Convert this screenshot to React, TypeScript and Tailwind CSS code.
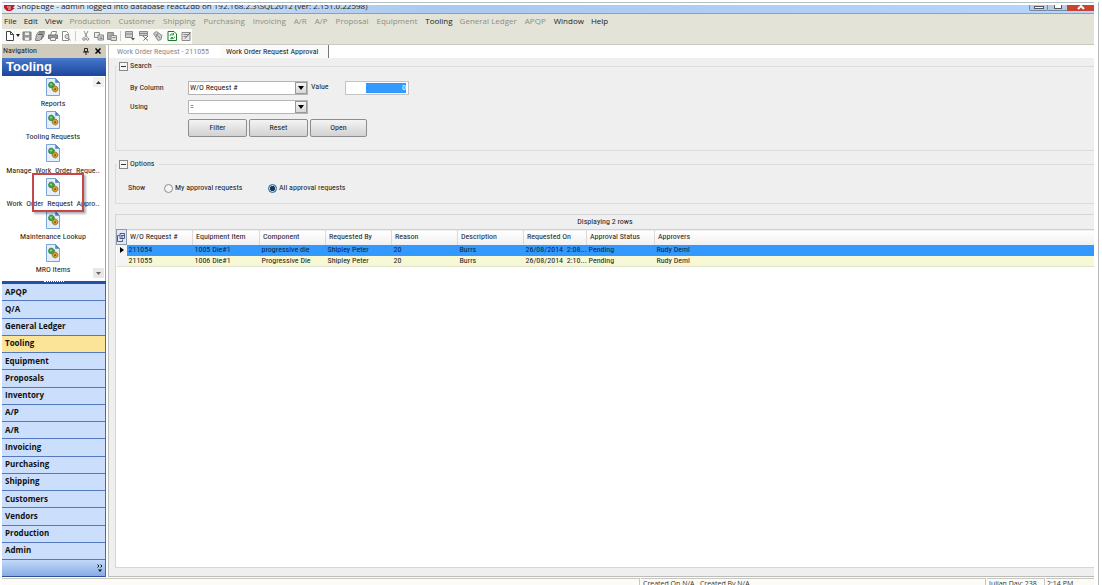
import type { ReactNode } from "react";
import clsx from "clsx";

const MENU = [
  { label: "File", on: true },
  { label: "Edit", on: true },
  { label: "View", on: true },
  { label: "Production" },
  { label: "Customer" },
  { label: "Shipping" },
  { label: "Purchasing" },
  { label: "Invoicing" },
  { label: "A/R" },
  { label: "A/P" },
  { label: "Proposal" },
  { label: "Equipment" },
  { label: "Tooling", on: true },
  { label: "General Ledger" },
  { label: "APQP" },
  { label: "Window", on: true },
  { label: "Help", on: true },
];

const SHORTCUTS = [
  "Reports",
  "Tooling Requests",
  "Manage  Work  Order  Reque..",
  "Work  Order  Request  Appro..",
  "Maintenance Lookup",
  "MRO Items",
];

const MODULES = [
  "APQP",
  "Q/A",
  "General Ledger",
  "Tooling",
  "Equipment",
  "Proposals",
  "Inventory",
  "A/P",
  "A/R",
  "Invoicing",
  "Purchasing",
  "Shipping",
  "Customers",
  "Vendors",
  "Production",
  "Admin",
];

const COLUMNS = [
  "W/O Request #",
  "Equipment Item",
  "Component",
  "Requested By",
  "Reason",
  "Description",
  "Requested On",
  "Approval Status",
  "Approvers",
];

const ROWS = [
  ["211054", "1005 Die#1", "progressive die", "Shipley Peter", "20", "Burrs", "26/08/2014  2:08...", "Pending", "Rudy Deml"],
  ["211055", "1006 Die#1", "Progressive Die", "Shipley Peter", "20", "Burrs", "26/08/2014  2:10...", "Pending", "Rudy Deml"],
];

function DocIcon() {
  return (
    <svg viewBox="0 0 14 18" className="h-[18px] w-3.5 shrink-0">
      <path d="M.5.5h9l4 4v13H.5z" fill="#e4effc" stroke="#7da3d8" />
      <path d="M9.5.5v4h4z" fill="#4f83cc" stroke="#5d8acb" strokeWidth=".6" />
      <path d="m2.500 6.500 1-2 2.500-.5 2.500 2-.5 2.500L6 10 3 9z" fill="#3fa34a" stroke="#2a7d38" strokeWidth=".7" />
      <path d="m6 11 1.500-2.500L10 8l2 2-.3 2.500-2.200 1.500L7 13z" fill="#d9a22c" stroke="#8a6212" strokeWidth=".7" />
      <circle cx="9.200" cy="11.200" r="1" fill="#7a560f" />
      <circle cx="5" cy="6.500" r=".9" fill="#a5dfa8" />
    </svg>
  );
}

function Tool({ label, children }: { label: string; children: ReactNode }) {
  return (
    <button type="button" aria-label={label} className="flex h-3 w-[13px] items-center justify-center">
      <svg viewBox="0 0 10 10" className="h-2.5 w-2.5" fill="none" stroke="#8a8a8a" strokeWidth="1">
        {children}
      </svg>
    </button>
  );
}

function Toolbar() {
  return (
    <div className="flex h-[15px] w-[190px] items-center bg-[#fafaf7] pb-0.5 pl-px">
      <Tool label="New">
        <path d="M1.500.5h4l3 3v6h-7zM5.500.5v3h3" stroke="#444" fill="#fff" />
      </Tool>
      <svg viewBox="0 0 4 3" className="h-[3px] w-1">
        <path d="M0 0h4L2 3z" fill="#222" />
      </svg>
      <Tool label="Save">
        <path d="M1 1h8v8H1z" fill="#999" stroke="#7a7a7a" />
        <path d="M3 1.500h4V4H3zM3 6.500h4V9H3z" fill="#eee" stroke="none" />
      </Tool>
      <Tool label="Save all">
        <path d="M4 .5h5.500l-1 5.500-4 3.500H.5l1-6z" fill="#bbb" stroke="#808080" />
        <path d="M3 3.500h4.500l-1 5M4 2h4.500" stroke="#666" />
      </Tool>
      <Tool label="Print">
        <path d="M2.500 4 4 .5h4.500L7.500 4" fill="#fff" />
        <path d="M.5 4h9v3.500h-9z" fill="#999" stroke="#777" />
        <path d="M2.500 6.500h5v3h-5z" fill="#eee" />
      </Tool>
      <Tool label="Print preview">
        <path d="M1.500.5h4l2 2v7h-6z" fill="#fff" />
        <circle cx="6" cy="5.500" r="2" fill="#ddd" />
        <path d="m7.500 7 2 2.500" />
      </Tool>
      <span className="mx-[3px] h-2.5 w-px bg-[#ccc]" />
      <Tool label="Cut">
        <path d="m3 0 3 6M7 0 4 6" />
        <circle cx="3" cy="8" r="1.300" />
        <circle cx="6.500" cy="8" r="1.300" />
      </Tool>
      <Tool label="Copy">
        <path d="M.5 1.500h5v5h-5z" fill="#eee" />
        <path d="M4 4h5.500v5H4zM5.500 6h3M5.500 7.500h3" fill="#ddd" />
      </Tool>
      <Tool label="Paste">
        <path d="M.5 1.500h6v7h-6z" fill="#aaa" />
        <path d="M4 4.500h5.500v5H4zM5.500 6.500h3" fill="#ddd" />
      </Tool>
      <span className="mx-0.5 h-2.5 w-px bg-[#ccc]" />
      <div className="flex gap-px">
        <Tool label="Grid view">
          <path d="M.5.5h7v6h-7zM.5 3h7" fill="#ccc" />
          <path d="M6 7h4L8 9.500z" fill="#555" stroke="none" />
        </Tool>
        <Tool label="Remove grid">
          <path d="M.5.5h8v4h-8zM.5 2.500h8" fill="#ccc" />
          <path d="m4 5 5 4.500M9 5 4.500 9.500" stroke="#666" />
        </Tool>
        <Tool label="Attach">
          <path d="m.5 2.500 3-2 5.500 4-1 4-3 1z" fill="#ccc" />
          <path d="m3 3 4 4M5 2 3 6" />
        </Tool>
        <Tool label="Refresh">
          <path d="M1 .5h6l2.500 2.500v6.500H1z" fill="#fff" stroke="#1d7a2c" />
          <path d="M3 5a2 2 0 0 1 3.500-1.500M7.500 5.500A2 2 0 0 1 4 7M6.500 2v2h-2M4 8.500v-2h2" stroke="#29a03c" />
        </Tool>
        <Tool label="Notes">
          <path d="M1 1.500h8v8H1zM2.500 3.500h5M2.500 5.500h3" fill="#e4e4e4" />
          <path d="m4 7.500 5.500-6" stroke="#666" />
        </Tool>
      </div>
    </div>
  );
}

function TitleBar() {
  return (
    <header className="flex h-2 items-start overflow-hidden bg-linear-to-r from-[#dfeaf6] via-[#a9c9f0] via-40% to-[#b5d5fb]">
      <svg viewBox="0 0 12 8" className="ml-0.5 h-2 w-3 shrink-0">
        <path d="M0 0h11L9 3h2L7 6H3L0 3z" fill="#c01c28" />
        <path d="M3 2h4M4 4h3" stroke="#fff" strokeWidth=".8" />
      </svg>
      <h1 className="-mt-1 ml-px flex-1 whitespace-nowrap font-['Open_Sans',sans-serif] text-[8px] leading-[10px] text-[#222]">
        ShopEdge - admin logged into database react2db on 192.168.2.3\SQL2012 (ver: 2.151.0.22598)
      </h1>
      <button type="button" aria-label="Minimize" className="flex h-1.5 w-[19px] justify-center rounded-b-xs border border-t-0 border-[#7288a5] bg-[#b9cce6]">
        <span className="mt-px h-[3px] w-2.5 border border-[#556] bg-white" />
      </button>
      <button type="button" aria-label="Restore" className="flex h-1.5 w-[19px] justify-center border-b border-[#7288a5] bg-[#b9cce6]">
        <span className="h-1 w-2 border border-t-0 border-[#556] bg-white" />
      </button>
      <button type="button" aria-label="Close" className="flex h-1.5 w-[27px] justify-center bg-[#c9432f]">
        <svg viewBox="0 0 8 5" className="h-[5px] w-2">
          <path d="m1 4 3-3 3 3" stroke="#fff" strokeWidth="2" fill="none" />
        </svg>
      </button>
    </header>
  );
}

function Navigation() {
  return (
    <aside className="flex w-[104px] shrink-0 flex-col">
      <div className="flex h-[13px] items-center bg-[#d0cbbd] pr-[5px] pb-px text-[#222]">
        <span className="flex-1 pl-px">Navigation</span>
        <button type="button" aria-label="Pin" className="mr-1.5">
          <svg viewBox="0 0 6 7" className="h-[7px] w-1.5" stroke="#222" fill="none">
            <path d="M1.500.5h3v3h-3zM0 4h6M3 4v3" />
          </svg>
        </button>
        <button type="button" aria-label="Close navigation">
          <svg viewBox="0 0 6 6" className="h-1.5 w-1.5" stroke="#000" strokeWidth="1.500">
            <path d="m.5.5 5 5M5.500.5l-5 5" />
          </svg>
        </button>
      </div>
      <h2 className="h-[18px] bg-linear-to-b from-[#4778cc] to-[#1c459b] pl-1 font-['Liberation_Sans',sans-serif] text-[13px] leading-[18px] font-bold text-white">
        Tooling
      </h2>
      <div className="relative flex h-[205px] flex-col border-r border-[#8aa5d6] bg-white pt-0.5 pr-px pb-1">
        {SHORTCUTS.map((s) => (
          <a key={s} href="#" className="flex flex-1 flex-col items-center justify-between pb-0.5 whitespace-pre">
            <DocIcon />
            <span>{s}</span>
          </a>
        ))}
        <button type="button" aria-label="Scroll up" className="absolute top-px right-px flex h-2.5 w-[11px] items-center justify-center bg-[#f1f1f1]">
          <svg viewBox="0 0 5 3" className="h-[3px] w-[5px]"><path d="M0 3h5L2.500 0z" fill="#333" /></svg>
        </button>
        <button type="button" aria-label="Scroll down" className="absolute right-px bottom-[3px] flex h-2.5 w-[11px] items-center justify-center bg-[#e8e8e8]">
          <svg viewBox="0 0 5 3" className="h-[3px] w-[5px]"><path d="M0 0h5L2.500 3z" fill="#666" /></svg>
        </button>
        <span className="pointer-events-none absolute top-[97px] left-[30px] h-[39px] w-[52px] border-2 border-[#c4484b] shadow-[2px_2px_2px_rgba(0,0,0,0.3)]" />
      </div>
      <div className="flex h-[3px] justify-center bg-[#2450a8]">
        <span className="w-5 border-t border-dotted border-white" />
      </div>
      <nav className="flex flex-1 flex-col border-r border-[#4468b0] font-['Open_Sans',sans-serif] font-bold text-[#111]">
        {MODULES.map((m) => (
          <a
            key={m}
            href="#"
            className={clsx(
              "flex flex-1 items-center border-b border-[#5478bd] pb-px pl-[3px]",
              m === "Tooling" ? "bg-[#fbe398]" : "bg-[#cbdffc]",
            )}
          >
            {m}
          </a>
        ))}
        <div className="flex h-[17px] items-center justify-end border-b border-[#2c509c] bg-linear-to-b from-[#c3daf9] to-[#86abe4] pr-0.5">
          <button type="button" aria-label="More modules">
            <svg viewBox="0 0 6 8" className="h-2 w-1.5" fill="none" stroke="#111">
              <path d="m.5.5 1.500 1.500L.5 3.500m3-3L5 2 3.500 3.500" />
              <path d="M1 5.500h4L3 8z" fill="#111" stroke="none" />
            </svg>
          </button>
        </div>
      </nav>
    </aside>
  );
}

function Group({ title, className, children }: { title: string; className: string; children: ReactNode }) {
  return (
    <section className={clsx("flex flex-col", className)}>
      <div className="flex h-2.5 items-center gap-0.5">
        <span className="h-px w-0.5 bg-[#dcdcdc]" />
        <button type="button" aria-label={`Collapse ${title}`} className="flex h-[9px] w-[9px] items-center justify-center border border-[#888] bg-[#f6f6f6]">
          <span className="h-px w-[5px] bg-[#333]" />
        </button>
        <h3>{title}</h3>
        <span className="ml-0.5 h-px flex-1 bg-[#dcdcdc]" />
      </div>
      <div className="-mt-[5px] flex-1 border-b border-l border-[#dcdcdc]">{children}</div>
    </section>
  );
}

function DropDown({ id, options }: { id: string; options: string[] }) {
  return (
    <div className="relative w-[120px]">
      <select id={id} className="block h-[14px] w-full appearance-none border border-[#b5b5b5] bg-white pl-px leading-3">
        {options.map((o) => (
          <option key={o}>{o}</option>
        ))}
      </select>
      <span className="pointer-events-none absolute inset-y-px right-px flex w-3 items-center justify-center border border-[#999] bg-linear-to-b from-[#f5f5f5] to-[#d8d8d8]">
        <svg viewBox="0 0 6 4" className="h-1 w-1.5"><path d="M0 0h6L3 4z" fill="#000" /></svg>
      </span>
    </div>
  );
}

const BUTTON = "h-[18px] rounded-xs border border-[#8c8c8c] bg-linear-to-b from-[#f4f4f4] to-[#d2d2d2]";
const RADIO =
  "h-[9px] w-[9px] appearance-none rounded-full border border-[#8c8c8c] bg-[#f5f5f5] checked:border-[#2c628b] checked:bg-[radial-gradient(circle,#123a5c_45%,#b5dcf3_60%)]";

function Filters() {
  return (
    <>
      <Group title="Search" className="h-[90px]">
        <div className="flex pt-[15px] pl-3.5">
          <div className="grid grid-cols-[58px_auto] items-center gap-y-[5px]">
            <label htmlFor="column">By Column</label>
            <DropDown id="column" options={["W/O Request #", "Equipment Item", "Component"]} />
            <label htmlFor="using">Using</label>
            <DropDown id="using" options={["=", "<", ">"]} />
          </div>
          <label htmlFor="value" className="ml-[3px] w-[34px] leading-3">Value</label>
          <div className="h-[14px] w-16 border border-[#c4c4c4] bg-white py-px pr-0.5 pl-5">
            <input id="value" defaultValue="0" className="block h-2.5 w-full bg-[#3399ff] text-right text-white" />
          </div>
        </div>
        <div className="mt-[5px] flex gap-0.5 pl-[72px]">
          <button type="button" className={clsx(BUTTON, "w-[59px]")}>Filter</button>
          <button type="button" className={clsx(BUTTON, "w-[59px]")}>Reset</button>
          <button type="button" className={clsx(BUTTON, "w-[57px]")}>Open</button>
        </div>
      </Group>
      <Group title="Options" className="mt-2 h-[45px]">
        <div className="flex items-center pt-[19px] pl-3">
          <span className="w-9">Show</span>
          <label className="flex w-[104px] items-center gap-0.5">
            <input type="radio" name="show" className={RADIO} />
            My approval requests
          </label>
          <label className="flex items-center gap-0.5">
            <input type="radio" name="show" defaultChecked className={RADIO} />
            All approval requests
          </label>
        </div>
      </Group>
    </>
  );
}

function Results() {
  return (
    <section className="mt-2.5 flex flex-1 flex-col border border-r-0 border-[#d6d6d6] bg-white">
      <p className="h-[14px] bg-[#efeff0] text-center leading-[14px]">Displaying 2 rows</p>
      <table className="w-full table-fixed border-collapse text-left whitespace-pre">
        <colgroup>
          <col className="w-2.5" />
          <col className="w-[66px]" />
          <col className="w-[67px]" />
          <col className="w-[66px]" />
          <col className="w-[66px]" />
          <col className="w-[66px]" />
          <col className="w-[66px]" />
          <col className="w-[63px]" />
          <col className="w-[68px]" />
          <col />
        </colgroup>
        <thead>
          <tr className="h-[15px] border-t border-[#cfcfcf] bg-linear-to-b from-white to-[#f0f0f0]">
            <th className="border border-[#8d97ad] bg-[#e3e8f2] p-0">
              <svg viewBox="0 0 8 10" className="h-2.5 w-2" fill="none" stroke="#4a5c86">
                <path d="M2.500 3.500h-2v6h5v-2M3 1.500h4.500v5H3zM4 3.500h3M4 5h2" />
              </svg>
            </th>
            {COLUMNS.map((c) => (
              <th key={c} className="border-r border-[#dadada] p-0 pl-[3px] font-normal last:border-r-0">{c}</th>
            ))}
          </tr>
        </thead>
        <tbody>
          {ROWS.map((row, i) => (
            <tr key={row[0]} className={clsx("h-[11px] leading-[10px]", i === 0 ? "bg-[#3399ff] text-[#08264a]" : "border-b border-[#e2e3cf] bg-[#f7f8d6]")}>
              <td className="bg-[#f4f4f4] p-0">
                {i === 0 && (
                  <svg viewBox="0 0 4 6" className="ml-[3px] h-1.5 w-1"><path d="M0 0v6l4-3z" fill="#000" /></svg>
                )}
              </td>
              {row.map((cell, j) => (
                <td key={j} className="p-0 pl-0.5">{cell}</td>
              ))}
            </tr>
          ))}
        </tbody>
      </table>
    </section>
  );
}

export default function App() {
  return (
    <div className="flex h-screen overflow-hidden bg-white pl-0.5 font-['Roboto_Condensed','Roboto',sans-serif] text-[8px] leading-[10px] text-[#222]">
      <div className="flex min-w-0 flex-1 flex-col">
        <div className="mb-0.5 h-[3px] shrink-0 border-b border-[#b4bfc4]" />
        <TitleBar />
        <div className="border-t border-b border-t-[#8f9fae] border-b-[#c9cabe] bg-[#e3e4d7]">
          <nav className="flex h-[15px] items-center gap-[7px] pl-0.5 font-['Open_Sans',sans-serif]">
            {MENU.map((m) => (
              <a key={m.label} href="#" className={clsx("pb-0.5 whitespace-nowrap", m.on ? "text-[#222]" : "pr-px text-[#8d8e86]")}>
                {m.label}
              </a>
            ))}
          </nav>
          <Toolbar />
        </div>
        <div className="flex min-h-0 flex-1">
          <Navigation />
          <main className="ml-0.5 flex min-w-0 flex-1 flex-col border-b border-l border-[#bdbdbd] bg-[#efefef]">
            <div role="tablist" className="flex h-[13px] items-center bg-white pl-2">
              <button type="button" role="tab" className="w-[104px] text-left whitespace-nowrap text-[#8a8a8a]">
                Work Order Request - 211055
              </button>
              <button type="button" role="tab" aria-selected="true" className="h-full w-[108px] border-r border-[#777] bg-[#fafafa] pl-[5px] text-left whitespace-nowrap">
                Work Order Request Approval
              </button>
            </div>
            <div className="flex flex-1 flex-col pt-[3px] pb-2 pl-1.5">
              <Filters />
              <Results />
            </div>
          </main>
        </div>
        <footer className="flex h-2 shrink-0 items-start gap-px overflow-hidden bg-[#fcfbf5] pt-px font-['Open_Sans',sans-serif] text-[7px] text-[#333]">
          <span className="h-2 w-[638px] border-t border-r border-[#c8c8c0]" />
          <span className="flex-1 border-t border-r border-[#c8c8c0] pl-0.5 whitespace-pre">Created On N/A,  Created By N/A</span>
          <span className="w-[58px] border-t border-r border-[#c8c8c0] pl-0.5 whitespace-nowrap">Julian Day: 238</span>
          <span className="w-12 border-t border-[#c8c8c0] pl-px">2:14 PM</span>
        </footer>
      </div>
      <div className="mt-0.5 ml-1 w-1 shrink-0 border-l border-[#b9bcc0]" />
    </div>
  );
}
